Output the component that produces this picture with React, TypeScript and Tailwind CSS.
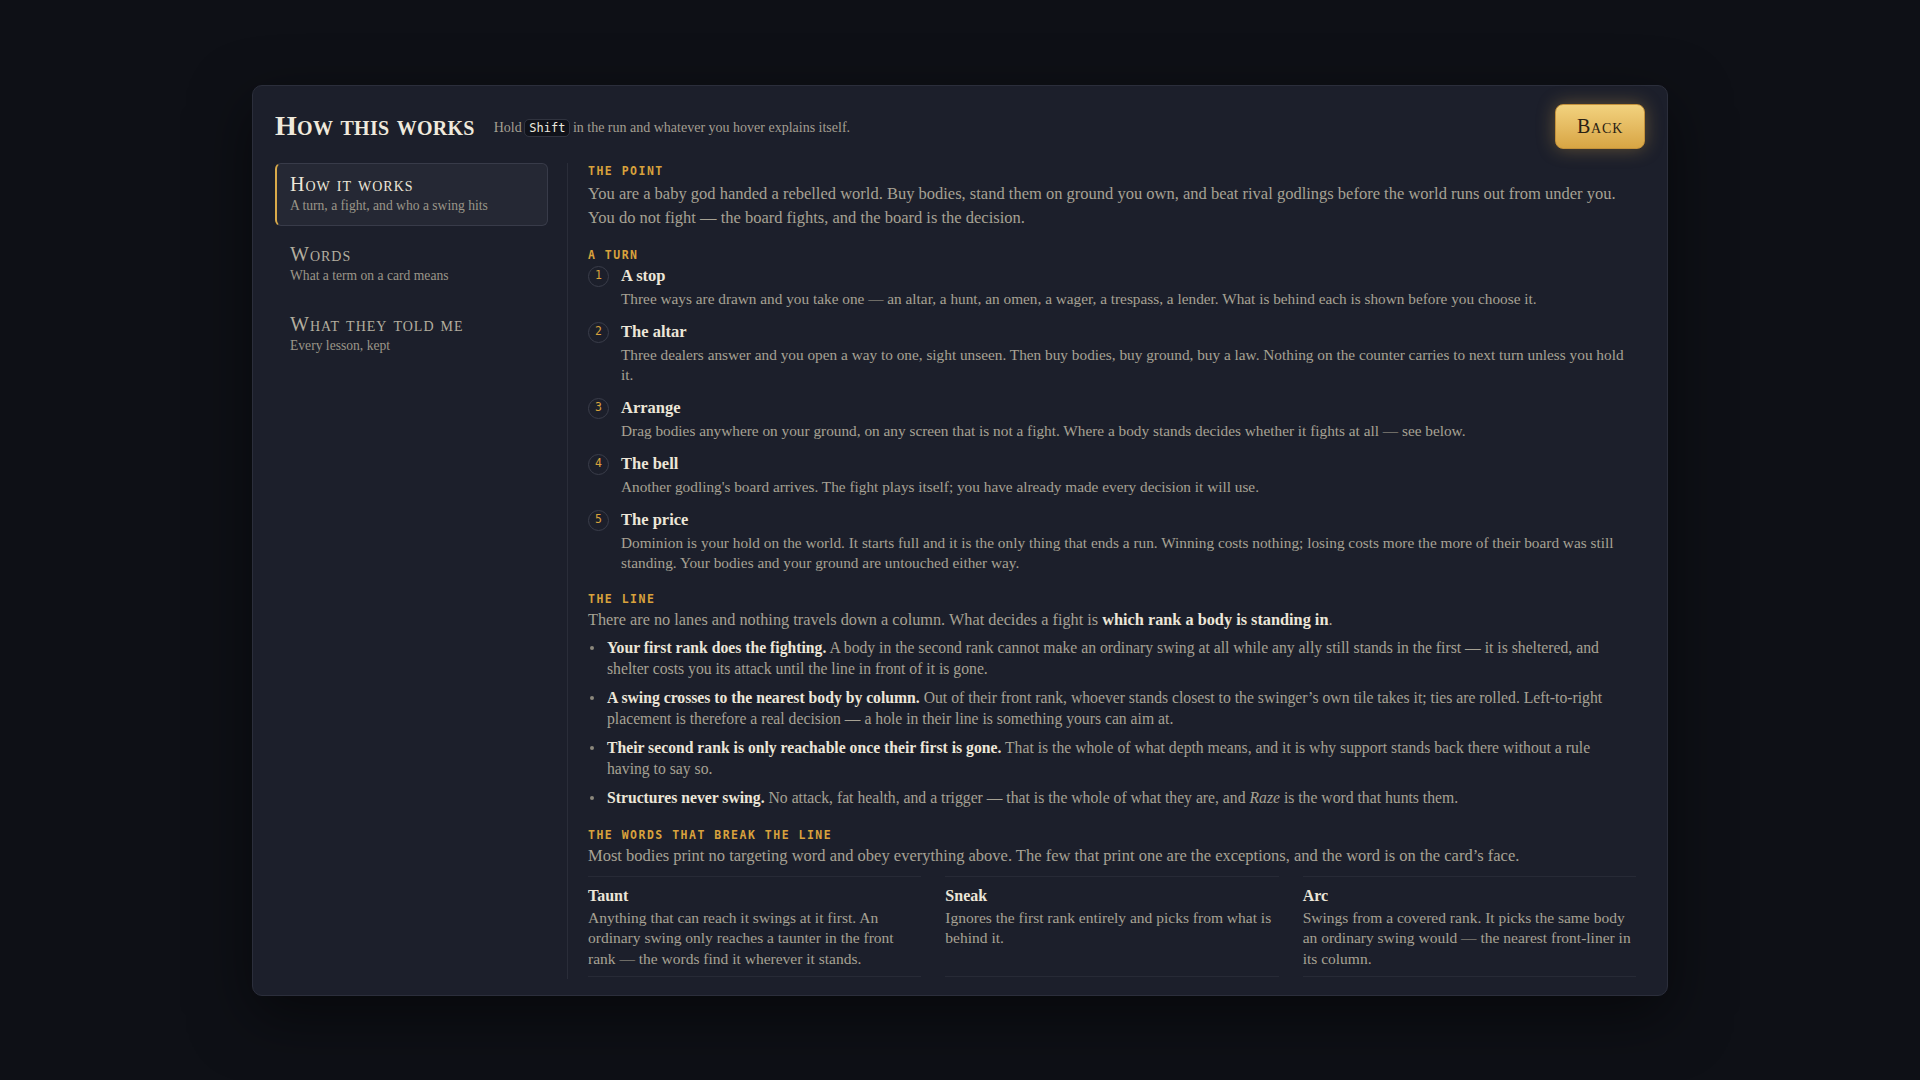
import React from 'react';

const steps = [
  {
    n: 1,
    title: 'A stop',
    body: 'Three ways are drawn and you take one — an altar, a hunt, an omen, a wager, a trespass, a lender. What is behind each is shown before you choose it.',
  },
  {
    n: 2,
    title: 'The altar',
    body: 'Three dealers answer and you open a way to one, sight unseen. Then buy bodies, buy ground, buy a law. Nothing on the counter carries to next turn unless you hold it.',
  },
  {
    n: 3,
    title: 'Arrange',
    body: 'Drag bodies anywhere on your ground, on any screen that is not a fight. Where a body stands decides whether it fights at all — see below.',
  },
  {
    n: 4,
    title: 'The bell',
    body: "Another godling's board arrives. The fight plays itself; you have already made every decision it will use.",
  },
  {
    n: 5,
    title: 'The price',
    body: 'Dominion is your hold on the world. It starts full and it is the only thing that ends a run. Winning costs nothing; losing costs more the more of their board was still standing. Your bodies and your ground are untouched either way.',
  },
];

const words = [
  {
    title: 'Taunt',
    body: 'Anything that can reach it swings at it first. An ordinary swing only reaches a taunter in the front rank — the words find it wherever it stands.',
  },
  {
    title: 'Sneak',
    body: 'Ignores the first rank entirely and picks from what is behind it.',
  },
  {
    title: 'Arc',
    body: 'Swings from a covered rank. It picks the same body an ordinary swing would — the nearest front-liner in its column.',
  },
];

function Label({ children }: { children: React.ReactNode }) {
  return (
    <div className="font-['DejaVu_Sans_Mono',monospace] text-[11.5px] leading-[16px] font-bold tracking-[0.13em] text-[#d9a23c] uppercase">
      {children}
    </div>
  );
}

function Bullet({ lead, children }: { lead: string; children: React.ReactNode }) {
  return (
    <li className="flex gap-[13px]">
      <span className="mt-[9px] h-[4px] w-[4px] shrink-0 rounded-full bg-[#8c887c] ml-[2px]" />
      <p>
        <b className="font-bold text-[#ece6d8]">{lead}</b> {children}
      </p>
    </li>
  );
}

function NavItem({ title, sub, active }: { title: string; sub: string; active?: boolean }) {
  return (
    <div
      className={
        active
          ? 'rounded-[6px] border border-[#383b49] border-l-2 border-l-[#d9aa4a] bg-[#252834] pl-[13px] pr-3 pt-[9px] pb-[10px]'
          : 'rounded-[6px] border border-transparent pl-[14px] pr-3 pt-[9px] pb-[10px]'
      }
    >
      <div
        className={
          (active ? 'text-[#ece6d8] ' : 'text-[#b3ae9f] ') +
          '[font-variant:small-caps] text-[20px] leading-[23px] tracking-[0.05em]'
        }
      >
        {title}
      </div>
      <div className="text-[13.6px] leading-[19px] text-[#9b9689]">{sub}</div>
    </div>
  );
}

export default function App() {
  return (
    <div className="min-h-screen w-full bg-[#0e1016] flex items-center justify-center font-['Liberation_Serif',serif]">
      <div className="w-[1416px] h-[911px] rounded-[10px] border border-[#2b2e3b] bg-[#1c1f2b] px-[22px] pt-[18px] pb-[16px] flex flex-col shadow-[0_20px_60px_rgba(0,0,0,0.5)]">
        {/* header */}
        <header className="flex items-center justify-between h-[45px]">
          <div className="flex items-center gap-[19px]">
            <h1 className="[font-variant:small-caps] font-bold text-[28px] leading-[32px] text-[#efe9dc] tracking-[0.01em]">How this works</h1>
            <p className="text-[14px] text-[#a39e91] pt-[2px]">
              Hold{' '}
              <kbd className="font-['DejaVu_Sans_Mono',monospace] text-[12px] text-[#ece8de] bg-[#10121a] rounded-[4px] px-[4px] py-[1px] outline outline-1 outline-[#30333f]">
                Shift
              </kbd>{' '}
              in the run and whatever you hover explains itself.
            </p>
          </div>
          <button className="h-[45px] w-[90px] rounded-[8px] border border-[#c4913a] bg-gradient-to-b from-[#f2d27e] to-[#d8a543] text-[#2a2113] [font-variant:small-caps] text-[20px] tracking-[0.04em] shadow-[0_0_18px_rgba(226,176,76,0.35)]">
            Back
          </button>
        </header>

        <div className="mt-[14px] flex flex-1 min-h-0">
          {/* sidebar */}
          <nav className="w-[273px] shrink-0 flex flex-col gap-[7px]">
            <NavItem title="How it works" sub="A turn, a fight, and who a swing hits" active />
            <NavItem title="Words" sub="What a term on a card means" />
            <NavItem title="What they told me" sub="Every lesson, kept" />
          </nav>

          {/* content */}
          <main className="ml-[19px] flex-1 border-l border-[#2a2d39] pl-[20px] pr-[9px] text-[#a7a294]">
            <Label>The point</Label>
            <p className="mt-[3px] text-[16.5px] leading-[24px]">
              You are a baby god handed a rebelled world. Buy bodies, stand them on ground you own, and beat rival godlings before the world runs out from under you. You do not fight — the board fights, and the board is the decision.
            </p>

            <div className="mt-[17px]">
              <Label>A turn</Label>
              <ol className="mt-[2px] flex flex-col gap-[12px]">
                {steps.map((s) => (
                  <li key={s.n} className="flex gap-[12px]">
                    <span className="mt-[1px] flex h-[21px] w-[21px] shrink-0 items-center justify-center rounded-full border border-[#3a3d4a] font-['DejaVu_Sans_Mono',monospace] text-[11.5px] text-[#d9a23c]">
                      {s.n}
                    </span>
                    <div>
                      <div className="text-[16.5px] leading-[22px] font-bold text-[#ece6d8]">{s.title}</div>
                      <p className="mt-[2px] text-[15.3px] leading-[20px]">{s.body}</p>
                    </div>
                  </li>
                ))}
              </ol>
            </div>

            <div className="mt-[18px]">
              <Label>The line</Label>
              <p className="mt-[1px] text-[16.3px] leading-[24px]">
                There are no lanes and nothing travels down a column. What decides a fight is{' '}
                <b className="font-bold text-[#ece6d8]">which rank a body is standing in</b>.
              </p>
              <ul className="mt-[5px] flex flex-col gap-[8px] text-[15.7px] leading-[21px]">
                <Bullet lead="Your first rank does the fighting.">
                  A body in the second rank cannot make an ordinary swing at all while any ally still stands in the first — it is sheltered, and shelter costs you its attack until the line in front of it is gone.
                </Bullet>
                <Bullet lead="A swing crosses to the nearest body by column.">
                  Out of their front rank, whoever stands closest to the swinger’s own tile takes it; ties are rolled. Left-to-right placement is therefore a real decision — a hole in their line is something yours can aim at.
                </Bullet>
                <Bullet lead="Their second rank is only reachable once their first is gone.">
                  That is the whole of what depth means, and it is why support stands back there without a rule having to say so.
                </Bullet>
                <Bullet lead="Structures never swing.">
                  No attack, fat health, and a trigger — that is the whole of what they are, and <i>Raze</i> is the word that hunts them.
                </Bullet>
              </ul>
            </div>

            <div className="mt-[19px]">
              <Label>The words that break the line</Label>
              <p className="mt-[1px] text-[16.5px] leading-[24px]">
                Most bodies print no targeting word and obey everything above. The few that print one are the exceptions, and the word is on the card’s face.
              </p>
              <div className="mt-[8px] grid grid-cols-3 gap-[24px]">
                {words.map((w) => (
                  <div key={w.title} className="border-y border-[#272a36] pt-[8px] pb-[7px]">
                    <div className="text-[16px] leading-[22px] font-bold text-[#ece6d8]">{w.title}</div>
                    <p className="mt-[1px] text-[15.5px] leading-[20.5px]">{w.body}</p>
                  </div>
                ))}
              </div>
            </div>
          </main>
        </div>
      </div>
    </div>
  );
}
